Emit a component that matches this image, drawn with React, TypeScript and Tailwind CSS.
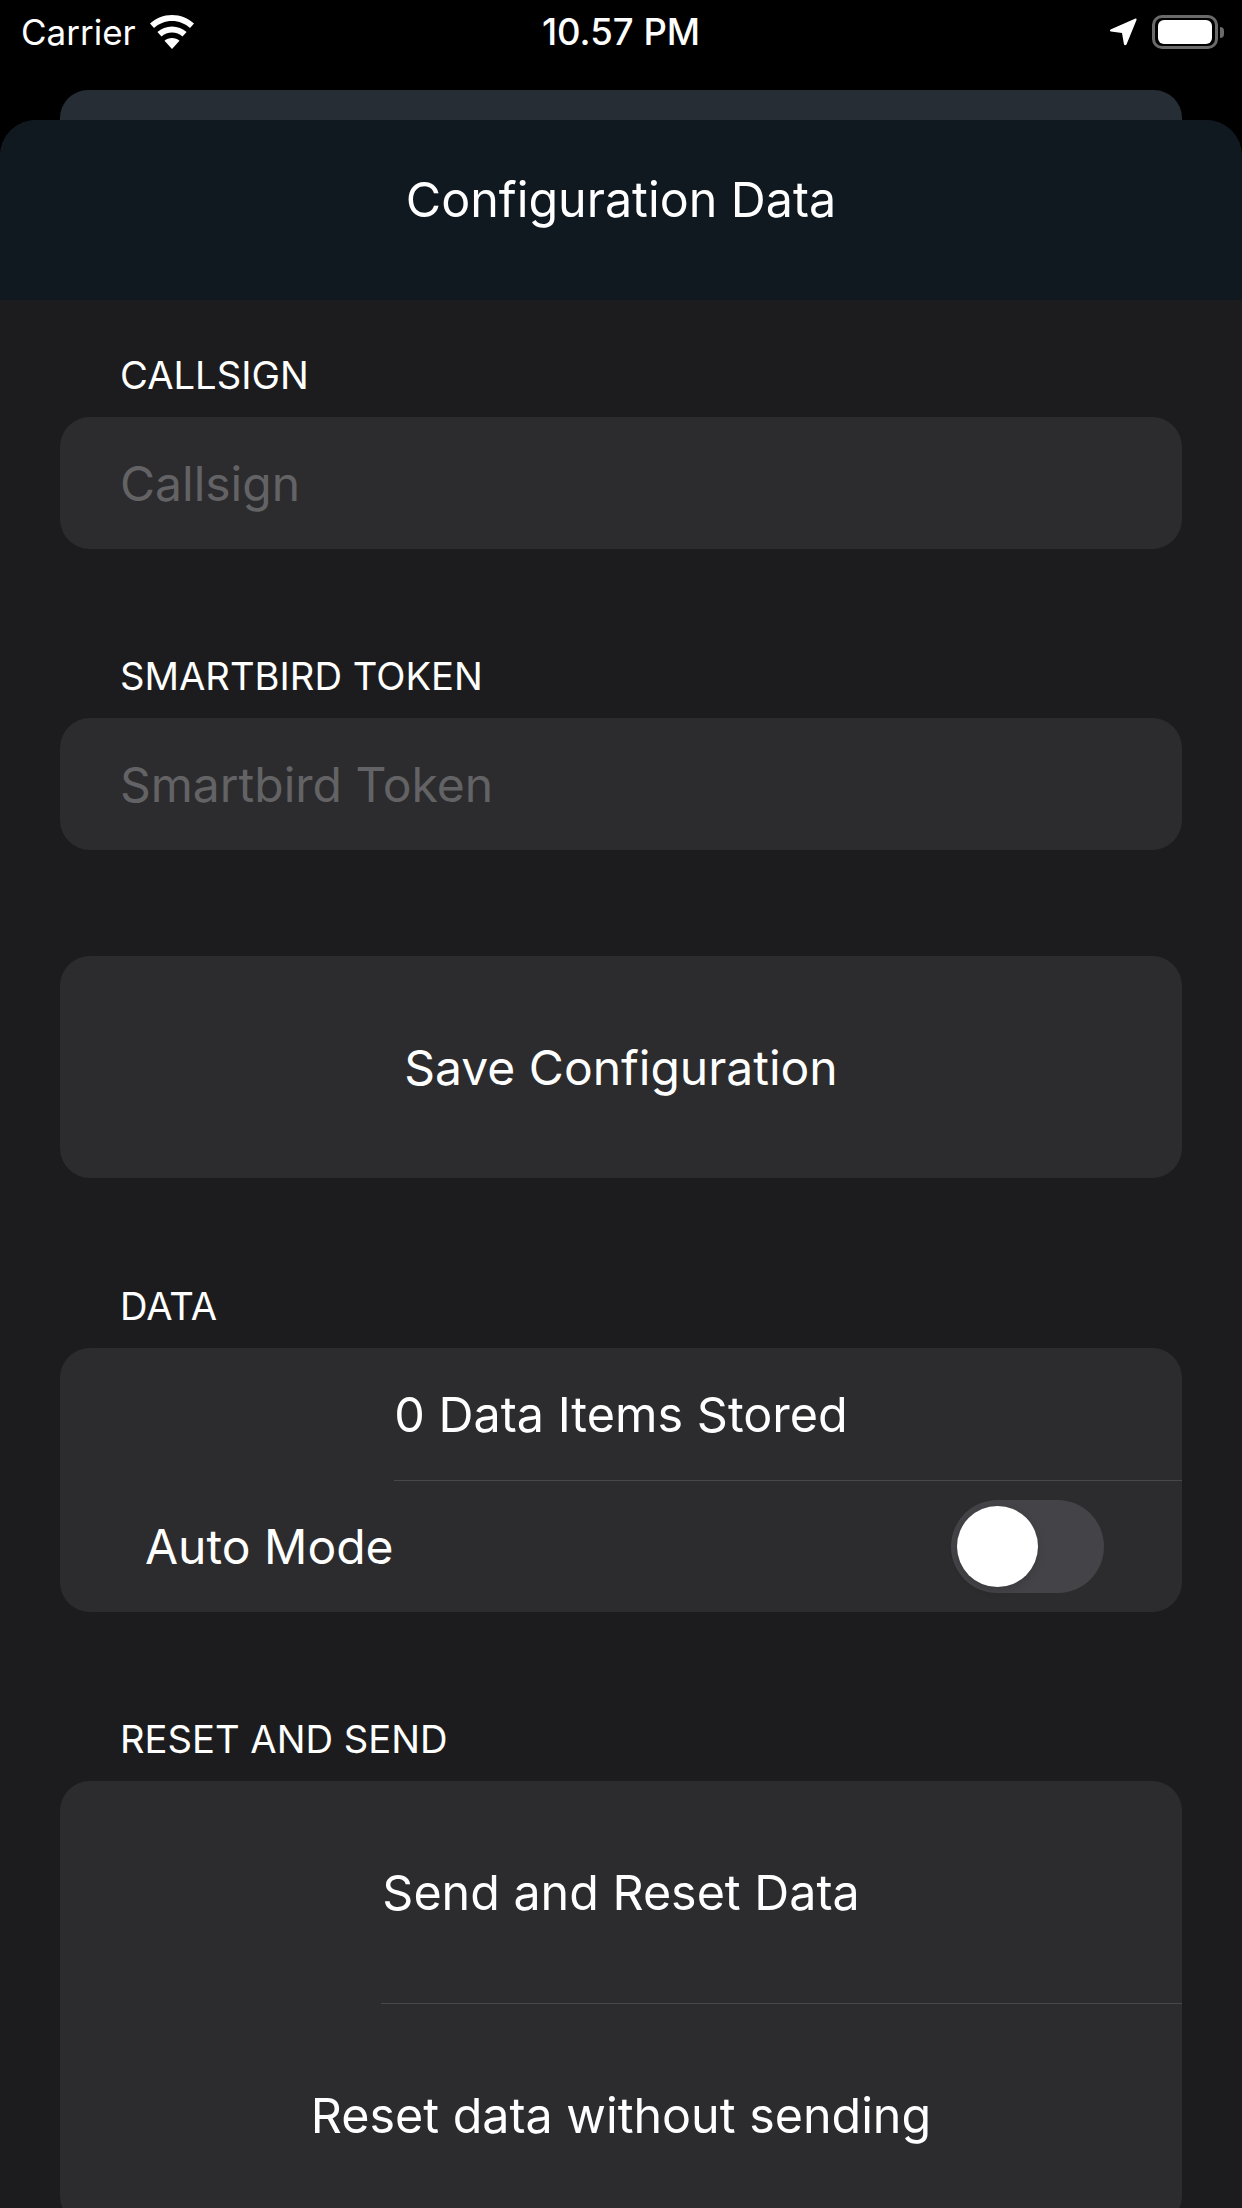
const font = { fontFamily: "Inter, 'Liberation Sans', sans-serif" };

const SectionLabel = ({ text, className }: { text: string; className: string }) => (
  <p className={`pl-[60px] text-[38.200px] leading-[44px] text-white ${className}`}>{text}</p>
);

const InputField = ({ placeholder }: { placeholder: string }) => (
  <div className="flex h-[132px] items-center rounded-[30px] bg-[#2c2c2e] pl-[60px] pt-[2px] text-[48px] text-[#636366]">
    {placeholder}
  </div>
);

const WifiIcon = () => (
  <svg width="46" height="34" viewBox="0 0 46 34" fill="white">
    <path d="M23 0C14.500 0 6.800 3.300 1 8.600L5 13C9.700 8.700 16 6 23 6s13.300 2.700 18 7l4-4.400C39.200 3.300 31.500 0 23 0z" />
    <path d="M23 11.500c-5.600 0-10.700 2.100-14.600 5.600l4.100 4.400c2.800-2.500 6.500-4 10.500-4s7.700 1.500 10.500 4l4.100-4.400c-3.900-3.500-9-5.600-14.600-5.600z" />
    <path d="M23 23c-2.900 0-5.500 1-7.500 2.800L23 34l7.500-8.200C28.500 24 25.900 23 23 23z" />
  </svg>
);

const LocationIcon = () => (
  <svg width="28" height="28" viewBox="0 0 28 28" fill="white">
    <path d="M26.500 0.500 L1.500 11.500 Q0 13 2 13.500 L13 15 L15 26.500 Q16 28 17.500 26.500 L27.500 2 Q28 0 26.500 0.500z" />
  </svg>
);

const BatteryIcon = () => (
  <div className="flex items-center">
    <div className="flex h-[34px] w-[66px] items-center justify-center rounded-[10px] border-[3px] border-[#6a6a6a]">
      <div className="h-[24px] w-[54px] rounded-[6px] bg-white" />
    </div>
    <div className="ml-[2px] h-[11px] w-[4px] rounded-r-full bg-[#6a6a6a]" />
  </div>
);

const App = () => {
  return (
    <div className="h-[2208px] w-[1242px] overflow-hidden bg-black text-white" style={font}>
      <div className="relative flex h-[90px] items-start justify-between pl-[21px] pr-[18px] pt-[13px]">
        <div className="flex items-center gap-[13px]">
          <span className="text-[35px] leading-[38px]">Carrier</span>
          <WifiIcon />
        </div>
        <span className="absolute left-0 right-0 text-center text-[36.500px] font-medium leading-[38px]">10.57 PM</span>
        <div className="flex items-center gap-[15px] pt-[2px]">
          <LocationIcon />
          <BatteryIcon />
        </div>
      </div>

      <div className="mx-[60px] mb-[-30px] h-[60px] rounded-t-[28px] bg-[#262d35]" />

      <div className="relative h-[2088px] overflow-hidden rounded-t-[36px] bg-[#1c1c1e]">
        <div className="flex h-[180px] items-center justify-center bg-[#101820] pb-[21px] text-[48.400px] leading-[56px]">
          Configuration Data
        </div>

        <div className="px-[60px]">
          <SectionLabel text="CALLSIGN" className="mt-[53px] mb-[20px]" />
          <InputField placeholder="Callsign" />

          <SectionLabel text="SMARTBIRD TOKEN" className="mt-[105px] mb-[20px]" />
          <InputField placeholder="Smartbird Token" />

          <div className="mt-[106px] flex h-[222px] items-center justify-center rounded-[30px] bg-[#2c2c2e] pt-[2px] text-[48px]">
            Save Configuration
          </div>

          <SectionLabel text="DATA" className="mt-[106px] mb-[20px]" />
          <div className="rounded-[30px] bg-[#2c2c2e]">
            <div className="flex h-[132px] items-center justify-center pt-[3px] text-[48.500px]">0 Data Items Stored</div>
            <div className="ml-[334px] h-px bg-[#48484a]" />
            <div className="flex h-[131px] items-center justify-between pl-[85px] pr-[78px] text-[48px]">
              <span>Auto Mode</span>
              <div className="flex h-[93px] w-[153px] items-center rounded-full bg-[#444448] pl-[6px]">
                <div className="h-[81px] w-[81px] rounded-full bg-white shadow-[0_3px_8px_rgba(0,0,0,0.15)]" />
              </div>
            </div>
          </div>

          <SectionLabel text="RESET AND SEND" className="mt-[105px] mb-[20px]" />
          <div className="rounded-[30px] bg-[#2c2c2e]">
            <div className="flex h-[222px] items-center justify-center pt-[2px] text-[48.400px]">Send and Reset Data</div>
            <div className="ml-[321px] h-px bg-[#48484a]" />
            <div className="flex h-[222px] items-center justify-center pt-[2px] text-[48.400px]">Reset data without sending</div>
          </div>
        </div>
      </div>
    </div>
  );
};

export default App;
